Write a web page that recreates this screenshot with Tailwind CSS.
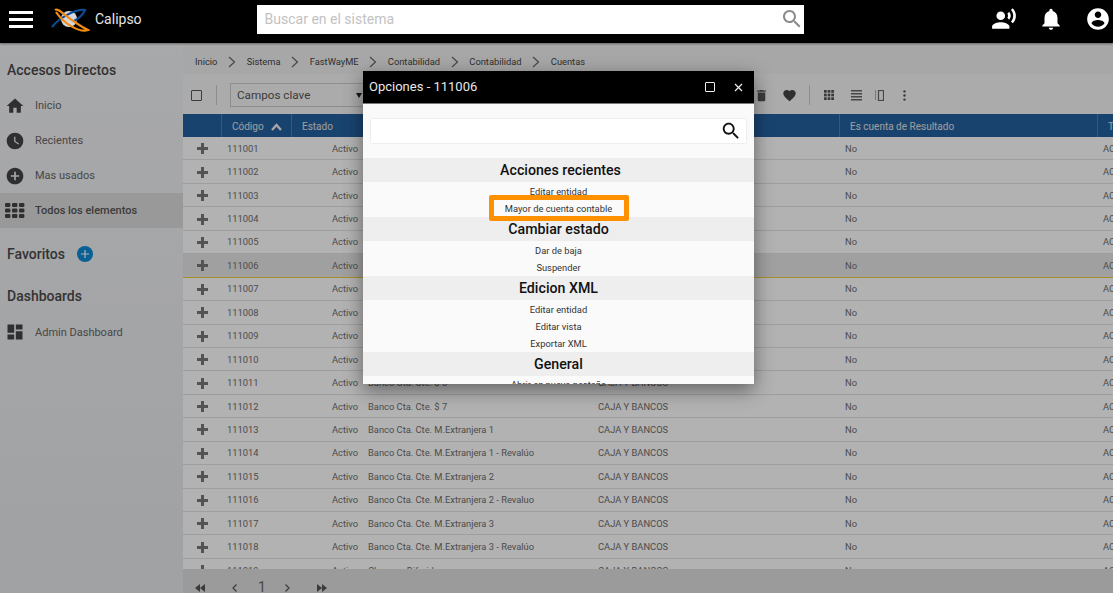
<!DOCTYPE html>
<html lang="en">
<head>
  <meta charset="UTF-8" />
  <title>Calipso</title>
  <script src="https://cdn.jsdelivr.net/npm/@tailwindcss/browser@4"></script>
</head>
<body class="relative h-[593px] w-[1113px] overflow-hidden bg-[#f2f3f5] font-['Roboto',sans-serif] text-[#555]">

  <!-- Top bar -->
  <header class="relative z-20 flex h-[43px] items-center bg-black pb-[5px] shadow-[0_1px_2px_rgba(0,0,0,0.4)]">
    <div class="ml-[9px] flex w-[24px] flex-col gap-[4px]">
      <span class="h-[3px] bg-white"></span>
      <span class="h-[3px] bg-white"></span>
      <span class="h-[3px] bg-white"></span>
    </div>
    <svg class="ml-[17px] h-[30px] w-[40px]" viewBox="0 0 40 30" fill="none">
      <circle cx="19" cy="15" r="8" fill="#d5d8de" />
      <path d="M2 23 C 8 15, 24 5, 35 6 C 34 10, 28 15, 24 17" stroke="#0e4a94" stroke-width="2.2" />
      <path d="M5 6 C 9 3, 15 14, 38 26 C 30 29, 14 20, 6 8" stroke="#f28c12" stroke-width="2.2" />
    </svg>
    <span class="ml-[5px] text-[14px] text-[#e4e4e4]">Calipso</span>
    <div class="ml-[115px] flex h-[29px] w-[547px] items-center justify-between bg-white pl-2">
      <span class="text-[14px] text-[#c2c2c2]">Buscar en el sistema</span>
      <svg class="h-[24px] w-[24px] fill-[#8a8a8a]" viewBox="0 0 24 24"><path d="M15.5 14h-.79l-.28-.27C15.41 12.59 16 11.11 16 9.5 16 5.91 13.09 3 9.5 3S3 5.91 3 9.5 5.91 16 9.5 16c1.61 0 3.09-.59 4.23-1.57l.27.28v.79l5 4.99L20.49 19l-4.99-5zm-6 0C7.01 14 5 11.99 5 9.5S7.01 5 9.5 5 14 7.01 14 9.5 11.99 14 9.5 14z"/></svg>
    </div>
    <div class="ml-auto flex items-center gap-[21px] pr-[2px]">
      <svg class="h-[26px] w-[26px] fill-white" viewBox="0 0 24 24"><circle cx="9" cy="9" r="4"/><path d="M9 15c-2.67 0-8 1.34-8 4v2h16v-2c0-2.66-5.33-4-8-4zm7.76-9.64l-1.68 1.69c.84 1.18.84 2.71 0 3.89l1.68 1.69c2.02-2.02 2.02-5.07 0-7.27zM20.07 2l-1.63 1.63c2.77 3.02 2.77 7.56 0 10.74L20.07 16c3.9-3.89 3.91-9.95 0-14z"/></svg>
      <svg class="h-[26px] w-[26px] fill-white" viewBox="0 0 24 24"><path d="M12 22c1.1 0 2-.9 2-2h-4c0 1.1.9 2 2 2zm6-6v-5c0-3.07-1.63-5.64-4.5-6.32V4c0-.83-.67-1.5-1.5-1.5s-1.5.67-1.5 1.5v.68C7.64 5.36 6 7.92 6 11v5l-2 2v1h16v-1l-2-2z"/></svg>
      <svg class="h-[26px] w-[26px] fill-white" viewBox="0 0 24 24"><path d="M12 2C6.48 2 2 6.48 2 12s4.48 10 10 10 10-4.48 10-10S17.52 2 12 2zm0 3c1.66 0 3 1.34 3 3s-1.34 3-3 3-3-1.34-3-3 1.34-3 3-3zm0 14.2c-2.5 0-4.71-1.28-6-3.22.03-1.99 4-3.08 6-3.08 1.99 0 5.97 1.09 6 3.08-1.29 1.94-3.5 3.22-6 3.22z"/></svg>
    </div>
  </header>

  <div class="flex h-[550px]">
    <!-- Sidebar -->
    <aside class="w-[183px] shrink-0 bg-gradient-to-b from-[#f1f2f4] to-[#e6e8ea] pt-[18px] text-[#666]">
      <h2 class="pl-[7px] text-[14px] leading-[18px] font-medium text-[#4a4a4a]">Accesos Directos</h2>
      <ul class="mt-[9px] text-[11px]">
        <li class="flex h-[35px] items-center gap-[10px] pl-[5px]">
          <svg class="h-[20px] w-[20px] fill-[#444]" viewBox="0 0 24 24"><path d="M10 20v-6h4v6h5v-8h3L12 3 2 12h3v8z"/></svg><span class="mt-[2px]">Inicio</span>
        </li>
        <li class="flex h-[35px] items-center gap-[10px] pl-[5px]">
          <svg class="h-[20px] w-[20px] fill-[#444]" viewBox="0 0 24 24"><path d="M12 2a10 10 0 1 0 0 20 10 10 0 0 0 0-20zm4.200 14.200L11 13V7h1.500v5.200l4.500 2.700-.8 1.300z"/></svg><span class="mt-[2px]">Recientes</span>
        </li>
        <li class="flex h-[35px] items-center gap-[10px] pl-[5px]">
          <svg class="h-[20px] w-[20px] fill-[#444]" viewBox="0 0 24 24"><path d="M12 2C6.48 2 2 6.48 2 12s4.48 10 10 10 10-4.48 10-10S17.52 2 12 2zm5 11h-4v4h-2v-4H7v-2h4V7h2v4h4v2z"/></svg><span class="mt-[2px]">Mas usados</span>
        </li>
        <li class="flex h-[35px] items-center gap-[10px] bg-[#dcdcdc] pl-[5px] font-medium text-[#555]">
          <svg class="h-[15px] w-[20px] fill-[#444]" viewBox="0 0 20 15">
            <rect x="0" y="0" width="5.4" height="4" rx="1"/><rect x="7" y="0" width="5.4" height="4" rx="1"/><rect x="14" y="0" width="5.4" height="4" rx="1"/>
            <rect x="0" y="5.5" width="5.4" height="4" rx="1"/><rect x="7" y="5.5" width="5.4" height="4" rx="1"/><rect x="14" y="5.5" width="5.4" height="4" rx="1"/>
            <rect x="0" y="11" width="5.4" height="4" rx="1"/><rect x="7" y="11" width="5.4" height="4" rx="1"/><rect x="14" y="11" width="5.4" height="4" rx="1"/>
          </svg><span class="mt-[2px]">Todos los elementos</span>
        </li>
      </ul>
      <div class="mt-[17px] flex items-center gap-[12px] pl-[7px]">
        <h2 class="text-[14px] leading-[18px] font-medium text-[#4a4a4a]">Favoritos</h2>
        <svg class="h-[16px] w-[16px]" viewBox="0 0 16 16"><circle cx="8" cy="8" r="8" fill="#0d8ad6"/><path d="M8 4v8M4 8h8" stroke="#fff" stroke-width="1.2"/></svg>
      </div>
      <h2 class="mt-[24px] pl-[7px] text-[14px] leading-[18px] font-medium text-[#4a4a4a]">Dashboards</h2>
      <div class="mt-[9px] flex h-[35px] items-center gap-[10px] pl-[5px] text-[11px]">
        <svg class="h-[20px] w-[20px] fill-[#444]" viewBox="0 0 24 24"><path d="M3 13h8V3H3v10zm0 8h8v-6H3v6zm10 0h8V11h-8v10zm0-18v6h8V3h-8z"/></svg><span class="mt-[4px]">Admin Dashboard</span>
      </div>
    </aside>

    <main class="flex w-[930px] flex-col">
      <!-- Breadcrumb -->
      <nav class="flex h-[31px] shrink-0 items-center gap-[10.6px] bg-[#f0f0f0] pl-[12px] pt-[6px] text-[9.33px] text-[#444]">
        <span>Inicio</span>
        <svg class="h-[12px] w-[8px]" viewBox="0 0 8 12" fill="none" stroke="#666" stroke-width="1.2"><path d="M1 1l5.500 5L1 11"/></svg>
        <span>Sistema</span>
        <svg class="h-[12px] w-[8px]" viewBox="0 0 8 12" fill="none" stroke="#666" stroke-width="1.2"><path d="M1 1l5.500 5L1 11"/></svg>
        <span>FastWayME</span>
        <svg class="h-[12px] w-[8px]" viewBox="0 0 8 12" fill="none" stroke="#666" stroke-width="1.2"><path d="M1 1l5.500 5L1 11"/></svg>
        <span>Contabilidad</span>
        <svg class="h-[12px] w-[8px]" viewBox="0 0 8 12" fill="none" stroke="#666" stroke-width="1.2"><path d="M1 1l5.500 5L1 11"/></svg>
        <span>Contabilidad</span>
        <svg class="h-[12px] w-[8px]" viewBox="0 0 8 12" fill="none" stroke="#666" stroke-width="1.2"><path d="M1 1l5.500 5L1 11"/></svg>
        <span>Cuentas</span>
      </nav>

      <!-- Toolbar -->
      <div class="flex h-[40px] shrink-0 items-center bg-[#f5f5f5] pl-[8px] pt-[2px]">
        <span class="h-[11px] w-[11px] rounded-[1px] border-[1.5px] border-[#555]"></span>
        <span class="ml-[14px] h-[20px] w-px bg-[#ccc]"></span>
        <div class="ml-[13px] flex h-[24px] w-[134px] items-center justify-between border border-[#ccc] pl-[6px] pr-[1px] text-[11.7px] text-[#555]">
          <span class="mt-[1px]">Campos clave</span>
          <span class="h-0 w-0 border-x-[3px] border-t-[5px] border-x-transparent border-t-[#222]"></span>
        </div>
        <div class="ml-auto flex items-center pr-[207px]">
          <svg class="h-[15px] w-[15px] fill-[#555]" viewBox="0 0 24 24"><path d="M6 19c0 1.100.9 2 2 2h8c1.100 0 2-.9 2-2V7H6v12zM19 4h-3.500l-1-1h-5l-1 1H5v2h14V4z"/></svg>
          <svg class="ml-[13px] h-[15px] w-[15px] fill-[#444]" viewBox="0 0 24 24"><path d="M12 21.35l-1.45-1.32C5.4 15.36 2 12.28 2 8.5 2 5.42 4.42 3 7.5 3c1.74 0 3.34.81 4.5 2.09C13.16 3.81 14.76 3 16.5 3 19.58 3 22 5.42 22 8.5c0 3.78-3.4 6.86-8.55 11.54L12 21.35z"/></svg>
          <span class="ml-[12px] h-[20px] w-px bg-[#ccc]"></span>
          <svg class="ml-[14px] h-[10px] w-[10px] fill-[#555]" viewBox="0 0 11 11">
            <rect width="3" height="3"/><rect x="4" width="3" height="3"/><rect x="8" width="3" height="3"/>
            <rect y="4" width="3" height="3"/><rect x="4" y="4" width="3" height="3"/><rect x="8" y="4" width="3" height="3"/>
            <rect y="8" width="3" height="3"/><rect x="4" y="8" width="3" height="3"/><rect x="8" y="8" width="3" height="3"/>
          </svg>
          <svg class="ml-[17px] h-[11px] w-[11px] fill-[#666]" viewBox="0 0 11 11">
            <rect width="11" height="1.5"/><rect y="3" width="11" height="1.5"/><rect y="6" width="11" height="1.5"/><rect y="9" width="11" height="1.5"/>
          </svg>
          <svg class="ml-[13px] h-[11px] w-[9px]" viewBox="0 0 9 11" fill="none" stroke="#666">
            <rect x="3.5" y=".5" width="5" height="10" stroke-width="1.2"/><path d="M.5 .5v10" stroke-dasharray="1 1"/>
          </svg>
          <svg class="ml-[19px] h-[11px] w-[3px] fill-[#555]" viewBox="0 0 3 11"><circle cx="1.5" cy="1.4" r="1.2"/><circle cx="1.5" cy="5.5" r="1.2"/><circle cx="1.5" cy="9.6" r="1.2"/></svg>
        </div>
      </div>

      <!-- Table -->
      <div class="grid h-[23px] shrink-0 grid-cols-[39px_70px_70px_230px_248px_258px_15px] overflow-hidden bg-[#25619f] text-[10px] leading-[25px] text-[#e2e2e2]">
        <div class="border-r border-[#4d7fb3]"></div>
        <div class="flex items-center gap-[7px] border-r border-[#4d7fb3] pl-[10px]">Código
          <svg class="h-[8px] w-[11px]" viewBox="0 0 11 8" fill="none" stroke="#eee" stroke-width="2.4"><path d="M1 7l4.500-5L10 7"/></svg>
        </div>
        <div class="pl-[10px]">Estado</div>
        <div></div>
        <div class="border-r border-[#4d7fb3]"></div>
        <div class="border-r border-[#4d7fb3] pl-[10px]">Es cuenta de Resultado</div>
        <div class="pl-[10px]">T</div>
      </div>
      <div id="rows" class="min-h-0 flex-1 overflow-hidden bg-white"></div>

      <!-- Pager -->
      <div class="flex h-[24px] shrink-0 items-end overflow-hidden bg-[#dedede] pb-[1px] text-[#666]">
        <svg class="ml-[12px] h-[8px] w-[10px] fill-[#555]" viewBox="0 0 10 8"><path d="M5 0v8L0 4zM10 0v8L5 4z"/></svg>
        <svg class="ml-[27px] h-[8px] w-[5px]" viewBox="0 0 5 8" fill="none" stroke="#555" stroke-width="1.2"><path d="M4.500 .5L1 4l3.500 3.500"/></svg>
        <span class="ml-[21px] mb-[-3px] text-[14px] leading-[16px]">1</span>
        <svg class="ml-[19px] h-[8px] w-[5px]" viewBox="0 0 5 8" fill="none" stroke="#555" stroke-width="1.2"><path d="M.5 .5L4 4 .5 7.500"/></svg>
        <svg class="ml-[27px] h-[8px] w-[10px] fill-[#555]" viewBox="0 0 10 8"><path d="M0 0v8l5-4zM5 0v8l5-4z"/></svg>
      </div>
    </main>
  </div>

  <!-- Backdrop -->
  <div class="absolute inset-x-0 top-[43px] bottom-0 z-10 bg-black/30"></div>

  <!-- Options dialog -->
  <section class="absolute top-[71px] left-[363px] z-20 h-[313px] w-[391px] overflow-hidden bg-[#fafafa] shadow-[0_6px_18px_rgba(0,0,0,0.45)]">
    <div class="flex h-[33px] items-center justify-between border-b border-[#777] bg-black pl-[6px] pr-[11px] text-[13px] text-[#e8e8e8]">
      Opciones - 111006
      <div class="flex items-center gap-[19px]">
        <span class="h-[10px] w-[10px] rounded-[1px] border border-[#eee]"></span>
        <svg class="h-[9px] w-[9px]" viewBox="0 0 9 9" stroke="#eee" stroke-width="1.2"><path d="M1 1l7 7M8 1L1 8"/></svg>
      </div>
    </div>
    <div class="mx-[8px] mt-[15px] flex h-[24px] items-center justify-end bg-white pr-[4px] shadow-[0_0_2px_rgba(0,0,0,0.15)]">
      <svg class="h-[22px] w-[22px] fill-[#111]" viewBox="0 0 24 24"><path d="M15.5 14h-.79l-.28-.27C15.41 12.59 16 11.11 16 9.5 16 5.91 13.09 3 9.5 3S3 5.91 3 9.5 5.91 16 9.5 16c1.61 0 3.09-.59 4.23-1.57l.27.28v.79l5 4.99L20.49 19l-4.99-5zm-6 0C7.01 14 5 11.99 5 9.5S7.01 5 9.5 5 14 7.01 14 9.5 11.99 14 9.5 14z"/></svg>
    </div>
    <div class="mt-[15px] text-center text-[9.33px] leading-[20px] text-[#333]">
      <h3 class="h-[24px] bg-[#eee] pl-[4px] text-[14.2px] leading-[24.5px] font-medium text-[#111]">Acciones recientes</h3>
      <p class="h-[17.4px]">Editar entidad</p>
      <p class="h-[17.4px]">Mayor de cuenta contable</p>
      <h3 class="h-[24px] bg-[#eee] text-[14.2px] leading-[24.5px] font-medium text-[#111]">Cambiar estado</h3>
      <p class="h-[17.4px]">Dar de baja</p>
      <p class="h-[17.4px]">Suspender</p>
      <h3 class="h-[24px] bg-[#eee] text-[14.2px] leading-[24.5px] font-medium text-[#111]">Edicion XML</h3>
      <p class="h-[17.4px]">Editar entidad</p>
      <p class="h-[17.4px]">Editar vista</p>
      <p class="h-[17.4px]">Exportar XML</p>
      <h3 class="h-[24px] bg-[#eee] text-[14.2px] leading-[24.5px] font-medium text-[#111]">General</h3>
      <p class="h-[17.4px] leading-[17px]">Abrir en nueva pestaña</p>
    </div>
    <!-- orange highlight around the second recent action -->
    <div class="absolute top-[124px] left-[126px] h-[26px] w-[140px] rounded-[2px] border-[5px] border-[#ff9100]"></div>
  </section>

  <script>
    const names = {
      111011: 'Banco Cta. Cte. $ 6',
      111012: 'Banco Cta. Cte. $ 7',
      111013: 'Banco Cta. Cte. M.Extranjera 1',
      111014: 'Banco Cta. Cte. M.Extranjera 1 - Revalúo',
      111015: 'Banco Cta. Cte. M.Extranjera 2',
      111016: 'Banco Cta. Cte. M.Extranjera 2 - Revaluo',
      111017: 'Banco Cta. Cte. M.Extranjera 3',
      111018: 'Banco Cta. Cte. M.Extranjera 3 - Revalúo',
      111019: 'Cheques Diferidos'
    };
    let html = '';
    for (let code = 111001; code <= 111019; code++) {
      const selected = code === 111006;
      const rowClass = selected ? 'bg-[#e6e6e6] border-[#f2cd3c]' : 'bg-white border-[#e2e2e2]';
      html += `<div class="grid h-[23.45px] grid-cols-[39px_70px_70px_230px_248px_258px_15px] items-center overflow-hidden whitespace-nowrap border-b pt-[1px] text-[9.33px] text-[#6e6e6e] ${rowClass}">
        <svg class="ml-[14px] h-[11px] w-[11px] fill-[#777]" viewBox="0 0 11 11"><path d="M4 0h3v4h4v3H7v4H4V7H0V4h4z"/></svg>
        <span class="pl-[5px]">${code}</span>
        <span class="pr-[4px] text-right">Activo</span>
        <span class="pl-[6px]">${names[code] || ''}</span>
        <span class="pl-[6px]">CAJA Y BANCOS</span>
        <span class="pl-[5px]">No</span>
        <span class="pl-[5px]">AC</span>
      </div>`;
    }
    document.getElementById('rows').innerHTML = html;
  </script>
</body>
</html>
